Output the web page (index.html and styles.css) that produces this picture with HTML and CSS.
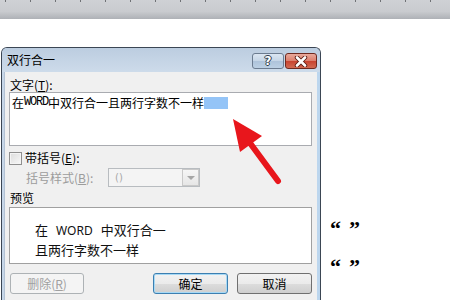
FILE: index.html
```html
<!DOCTYPE html>
<html lang="zh-CN">
<head>
  <meta charset="UTF-8" />
  <title>双行合一</title>
  <link rel="stylesheet" href="styles.css">
</head>
<body>
  <div class="ruler"></div>

  <div class="stage">
    <div class="dialog">
      <div class="titlebar">
        <span class="title">双行合一</span>
        <button class="cap help">?</button>
        <button class="cap close">
          <svg width="14" height="11" viewBox="0 0 14 11">
            <path d="M3 1.5 L11 9.5 M11 1.5 L3 9.5" stroke="#5a1a12" stroke-width="4.4" stroke-linecap="round"/>
            <path d="M3 1.5 L11 9.5 M11 1.5 L3 9.5" stroke="#fff" stroke-width="2.6" stroke-linecap="round"/>
          </svg>
        </button>
      </div>

      <div class="client">
        <div class="label">文字(<u>T</u>):</div>
        <div class="textbox">在<span class="half">WORD</span>中双行合一且两行字数不一样<span class="sel"></span></div>

        <div class="check-row">
          <span class="checkbox"></span>
          <span>带括号(<u>E</u>):</span>
        </div>

        <div class="style-row">
          <span class="muted">括号样式(<u>B</u>):</span>
          <div class="combo">
            <span class="combo-text">()</span>
            <span class="drop"></span>
          </div>
        </div>

        <div class="label preview-label">预览</div>
        <div class="preview">
          <div>在<span class="gap">WORD</span>中双行合一</div>
          <div>且两行字数不一样</div>
        </div>

        <div class="buttons">
          <button class="btn disabled">删除(<u>R</u>)</button>
          <button class="btn default">确定</button>
          <button class="btn">取消</button>
        </div>
      </div>
    </div>

    <div class="quotes">
      <div class="quote"><span>“</span><span>”</span></div>
      <div class="quote"><span>“</span><span>”</span></div>
    </div>
  </div>

  <svg class="arrow" width="450" height="300" viewBox="0 0 450 300">
    <line x1="250" y1="143" x2="278" y2="181" stroke="#e8161c" stroke-width="6" stroke-linecap="round"/>
    <polygon points="233,119 262,136 240,152" fill="#e8161c"/>
  </svg>
</body>
</html>
```

FILE: styles.css
```css
* {
  box-sizing: border-box;
}

body {
  margin: 0;
  width: 450px;
  height: 300px;
  overflow: hidden;
  position: relative;
  background: #fff;
  font-family: "Noto Sans CJK SC", "Noto Sans", sans-serif;
  font-size: 12px;
  color: #000;
}

u {
  text-decoration: underline;
}

.ruler {
  height: 19px;
  background: linear-gradient(#cfd1d5 0, #c9cbcf 60%, #aeb1b6 100%);
  position: relative;
}

.ruler::before {
  content: "";
  position: absolute;
  left: 0;
  top: 0;
  right: 0;
  height: 2px;
  background: repeating-linear-gradient(to right, transparent 0 5px, #6f7175 5px 6px, transparent 6px 25px);
}

.stage {
  display: flex;
  align-items: flex-start;
}

/* dialog window */
.dialog {
  margin: 28px 0 0 1px;
  width: 320px;
  height: 270px;
  border: 1px solid #3b4654;
  border-bottom: none;
  border-radius: 6px 6px 0 0;
  padding: 0 3px;
  background: linear-gradient(to right, #c6d6e8, #cfdeed 50%, #bcd6ee);
  display: flex;
  flex-direction: column;
}

.titlebar {
  height: 24px;
  display: flex;
  align-items: flex-start;
  background: linear-gradient(#bccde0, #cddbea);
  margin: 0 -3px;
  padding: 0 3px 0 5px;
  border-radius: 5px 5px 0 0;
}

.title {
  line-height: 22px;
  margin-top: 1px;
  font-size: 12px;
  color: #000;
}

.cap {
  margin-top: 5px;
  width: 32px;
  height: 16px;
  border-radius: 3px;
  padding: 0;
  display: flex;
  align-items: center;
  justify-content: center;
  font-family: "DejaVu Sans", sans-serif;
}

.help {
  margin-left: auto;
  margin-right: 1px;
  border: 1px solid #6c7c90;
  background: linear-gradient(#dbe6f2 0, #c5d5e6 50%, #aec3da 51%, #bcd0e4 100%);
  color: #fff;
  font-weight: bold;
  font-size: 12px;
  text-shadow: 0 0 1px #34404e, 1px 0 0 #34404e, -1px 0 0 #34404e, 0 1px 0 #34404e, 0 -1px 0 #34404e;
}

.close {
  border: 1px solid #6f2a20;
  background: linear-gradient(#e9a99b 0, #dc7d6b 50%, #c8432f 51%, #d26a52 100%);
}

.client {
  flex: 1;
  background: #f0f0f0;
  padding: 0 5px 0 4px;
  display: flex;
  flex-direction: column;
  border-left: 1px solid #b3c2d4;
  margin-left: -1px;
}

.label {
  line-height: 14px;
  height: 14px;
  margin-top: 6px;
  padding-left: 1px;
  flex-shrink: 0;
}

.preview-label {
  margin-top: 4px;
}

.textbox {
  height: 54px;
  flex-shrink: 0;
  border: 1px solid #a9abb0;
  background: #fff;
  padding: 3px 2px 0;
  line-height: 13px;
  display: flex;
  align-items: flex-start;
}

.half {
  font-family: "Liberation Mono", monospace;
  font-size: 12px;
  letter-spacing: -1.2px;
  line-height: 13px;
}

.sel {
  display: inline-block;
  width: 24px;
  height: 12px;
  margin-top: 1px;
  background: #94c4f7;
}

.check-row {
  margin-top: 5px;
  height: 14px;
  flex-shrink: 0;
  display: flex;
  align-items: center;
  gap: 3px;
  line-height: 14px;
}

.checkbox {
  width: 13px;
  height: 13px;
  border: 1px solid #8f8f8f;
  background: linear-gradient(135deg, #dcdcdc, #f8f8f8);
  box-shadow: inset 0 0 0 1px #f4f4f4;
}

.style-row {
  margin-top: 3px;
  height: 19px;
  flex-shrink: 0;
  display: flex;
  align-items: center;
  padding-left: 17px;
}

.muted {
  color: #9c9c9c;
  width: 82px;
}

.combo {
  width: 92px;
  height: 19px;
  border: 1px solid #b8bcc0;
  background: #f4f4f4;
  display: flex;
  align-items: center;
}

.combo-text {
  color: #a8a8a8;
  padding-left: 6px;
  flex: 1;
  font-family: "DejaVu Sans", sans-serif;
  font-size: 10px;
}

.drop {
  width: 17px;
  height: 17px;
  border: 1px solid #c9c9c9;
  background: linear-gradient(#f6f6f6, #e6e6e6);
  position: relative;
}

.drop::after {
  content: "";
  position: absolute;
  left: 4px;
  top: 6px;
  border-left: 4px solid transparent;
  border-right: 4px solid transparent;
  border-top: 4px solid #a6a6a6;
}

.preview {
  margin-top: 2px;
  height: 57px;
  flex-shrink: 0;
  border: 1px solid #a0a0a0;
  background: #fff;
  padding: 12px 0 0 25px;
  font-size: 13px;
  line-height: 19px;
  color: #111;
}

.gap {
  margin: 0 8px;
  font-family: "Noto Sans", sans-serif;
  font-size: 12px;
}

.buttons {
  margin-top: 9px;
  height: 21px;
  flex-shrink: 0;
  display: flex;
  padding-left: 1px;
}

.btn {
  width: 75px;
  height: 21px;
  border: 1px solid #707070;
  border-radius: 3px;
  background: linear-gradient(#f2f2f2 0, #ebebeb 50%, #dddddd 51%, #cfcfcf 100%);
  font-family: "Noto Sans CJK SC", sans-serif;
  font-size: 12px;
  line-height: 17px;
  padding: 0;
  color: #000;
}

.btn.disabled {
  width: 74px;
  border-color: #adb2b5;
  background: #f4f4f4;
  color: #a0a0a0;
  margin-right: 69px;
}

.btn.default {
  border-color: #3c7fb1;
  box-shadow: inset 0 0 0 1px #a7d9f5;
  margin-right: 9px;
}

/* quotes on the page, right of the dialog */
.quotes {
  margin-left: 9px;
  padding-top: 191px;
  font-family: "Liberation Serif", serif;
  font-weight: bold;
  font-size: 22px;
  line-height: 38px;
}

.quote {
  display: flex;
  gap: 8px;
}

.arrow {
  position: absolute;
  left: 0;
  top: 0;
  pointer-events: none;
}
```
